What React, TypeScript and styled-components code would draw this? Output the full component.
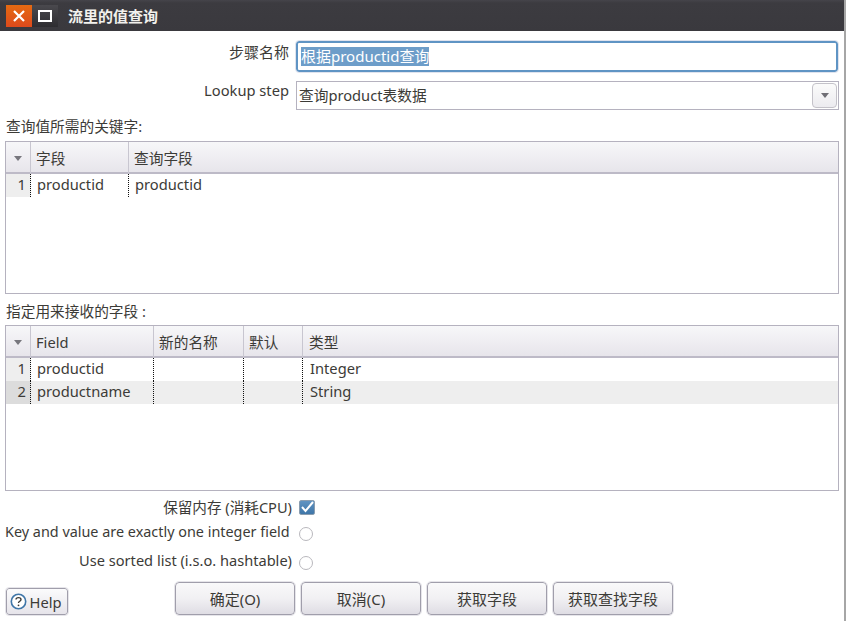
import React from "react";
import styled, { createGlobalStyle } from "styled-components";

const FONT = `"Noto Sans", "Noto Sans CJK SC", sans-serif`;

const GlobalStyle = createGlobalStyle`
    html, body {
        margin: 0;
        padding: 0;
        background: #fff;
    }
    body {
        font-family: ${FONT};
        font-size: 14.7px;
        color: #3c3b37;
    }
`;

const Window = styled.div`
    width: 846px;
    height: 621px;
    box-sizing: border-box;
    border-right: 2px solid #a6a6a6;
    display: flex;
    flex-direction: column;
    overflow: hidden;
`;

const TitleBar = styled.div`
    height: 31px;
    flex: none;
    margin-right: -2px;
    background: linear-gradient(#45444a 0, #3c3b40 3px, #3a393e 100%);
    display: flex;
    align-items: center;
    padding: 0 0 1px 6px;
    box-sizing: border-box;
`;

const WinButton = styled.div<{ $close?: boolean }>`
    width: 26px;
    height: 22px;
    margin-top: 1px;
    display: flex;
    align-items: center;
    justify-content: center;
    background: ${(p) => (p.$close ? "linear-gradient(#e56a12, #dd4a1c)" : "linear-gradient(#4a494e, #2e2d31)")};
    color: #fff;
`;

const Title = styled.span`
    margin: 2px 0 0 10px;
    color: #f2f1ed;
    font-size: 15px;
    font-weight: 700;
    line-height: 1;
`;

const Body = styled.div`
    flex: 1;
    min-height: 0;
    padding: 10px 5px 0;
    display: flex;
    flex-direction: column;
`;

const FormRow = styled.div<{ $h: number; $mb: number }>`
    display: grid;
    grid-template-columns: 284px 1fr;
    column-gap: 7px;
    height: ${(p) => p.$h}px;
    margin-bottom: ${(p) => p.$mb}px;
`;

const FormLabel = styled.label<{ $pt: number; $size?: number }>`
    text-align: right;
    line-height: 18px;
    padding-top: ${(p) => p.$pt}px;
    font-size: ${(p) => p.$size ?? 14.7}px;
`;

const NameInput = styled.div`
    margin-right: 1px;
    box-sizing: border-box;
    height: 31px;
    border: 2px solid #5f94c4;
    border-radius: 3px;
    outline: 1px solid #dfe3ee;
    padding-left: 3px;
    display: flex;
    align-items: center;
`;

const Selected = styled.span`
    background: #6d9dc9;
    color: #fff;
    font-size: 15px;
    line-height: 19px;
`;

const Combo = styled.div`
    box-sizing: border-box;
    height: 29px;
    border: 1px solid #b5b2bf;
    display: flex;
    align-items: center;
    justify-content: space-between;
    padding: 0 1px 0 2px;
`;

const ComboText = styled.span`
    margin-top: -2px;
`;

const ComboButton = styled.div`
    width: 25px;
    height: 25px;
    box-sizing: border-box;
    border: 1px solid #c4c2c9;
    border-radius: 4px;
    background: linear-gradient(#fbfbfb, #ecebef);
    display: flex;
    align-items: center;
    justify-content: center;
`;

const Arrow = styled.span<{ $c: string }>`
    width: 0;
    height: 0;
    border-left: 4px solid transparent;
    border-right: 4px solid transparent;
    border-top: 5px solid ${(p) => p.$c};
`;

const SectionLabel = styled.div<{ $h: number }>`
    height: ${(p) => p.$h}px;
    line-height: 18px;
    padding-left: 1px;
`;

const Table = styled.div<{ $h: number; $mb: number }>`
    box-sizing: border-box;
    width: 834px;
    height: ${(p) => p.$h}px;
    margin-bottom: ${(p) => p.$mb}px;
    border: 1px solid #b5b2bf;
    display: flex;
    flex-direction: column;
`;

const HeaderRow = styled.div<{ $cols: string }>`
    height: 32px;
    flex: none;
    box-sizing: border-box;
    display: grid;
    grid-template-columns: ${(p) => p.$cols};
    background: linear-gradient(#f7f7f9, #e7e5eb);
    border-bottom: 2px solid #bdbac7;
`;

const HeadCell = styled.div<{ $pl?: number }>`
    border-right: 1px solid #c8c6d0;
    padding-left: ${(p) => p.$pl ?? 5}px;
    line-height: 32px;
    white-space: nowrap;
    &:last-child {
        border-right: 0;
    }
`;

const MarkerHead = styled(HeadCell)`
    padding: 0 0 0 8px;
    display: flex;
    align-items: center;
`;

const DataRow = styled.div<{ $cols: string; $alt?: boolean }>`
    height: 23px;
    flex: none;
    display: grid;
    grid-template-columns: ${(p) => p.$cols};
    background: ${(p) => (p.$alt ? "#eeeeee" : "#fff")};
`;

const RowNumber = styled.div<{ $alt?: boolean }>`
    text-align: right;
    padding-right: 4px;
    line-height: 21px;
    background: ${(p) => (p.$alt ? "#dcdcdc" : "#eeeeee")};
    border-right: 1px dotted #111;
`;

const Cell = styled.div<{ $pl?: number }>`
    padding-left: ${(p) => p.$pl ?? 6}px;
    line-height: 21px;
    border-right: 1px dotted #111;
    white-space: nowrap;
    &:last-child {
        border-right: 0;
    }
`;

const OptionRow = styled.div<{ $h: number }>`
    display: grid;
    grid-template-columns: 287px 22px;
    column-gap: 8px;
    height: ${(p) => p.$h}px;
    align-items: center;
`;

const OptionLabel = styled.span<{ $inset?: number; $size?: number }>`
    text-align: right;
    font-size: ${(p) => p.$size ?? 14.6}px;
    white-space: nowrap;
    line-height: 18px;
    margin-right: ${(p) => p.$inset ?? 0}px;
`;

const CheckMark = styled.div`
    width: 16px;
    height: 15px;
    margin-left: -1px;
    border-radius: 2px;
    background: linear-gradient(#5f93c2, #3f76a8);
    border: 1px solid #8a9db0;
    box-sizing: border-box;
    display: flex;
    align-items: center;
    justify-content: center;
`;

const Radio = styled.div`
    width: 14px;
    height: 14px;
    margin: 5px 0 0 -1px;
    box-sizing: border-box;
    border: 1px solid #b9b8bd;
    border-radius: 50%;
    background: #fff;
`;

const Footer = styled.div`
    display: flex;
    align-items: flex-end;
    margin-top: 8px;
`;

const HelpButton = styled.div`
    width: 62px;
    height: 27px;
    margin-left: 1px;
    box-sizing: border-box;
    border: 1px solid #a09eab;
    border-radius: 3px;
    outline: 1px solid #e6e5ea;
    background: linear-gradient(#fbfbfc, #e6e4ea);
    display: flex;
    align-items: center;
    justify-content: center;
    gap: 3px;
    padding-right: 3px;
`;

const ButtonGroup = styled.div`
    display: flex;
    gap: 6px;
    margin-left: 107px;
`;

const Button = styled.div`
    width: 120px;
    height: 33px;
    box-sizing: border-box;
    border: 1px solid #a09eab;
    border-radius: 4px;
    outline: 1px solid #e6e5ea;
    background: linear-gradient(#f9f9fa 0, #f1f0f3 50%, #dfdde4 100%);
    display: flex;
    align-items: center;
    justify-content: center;
    font-size: 15px;
`;

const COLS_TOP = "25px 98px 1fr";
const COLS_BOTTOM = "25px 123px 90px 59px 1fr";

const App = () => (
    <>
        <GlobalStyle />
        <Window>
            <TitleBar>
                <WinButton $close>
                    <svg width="14" height="14" viewBox="0 0 14 14">
                        <path d="M2 2 L12 12 M12 2 L2 12" stroke="#fff" strokeWidth="2.2" />
                    </svg>
                </WinButton>
                <WinButton>
                    <svg width="14" height="12" viewBox="0 0 14 12">
                        <rect x="1" y="1" width="12" height="10" fill="none" stroke="#fff" strokeWidth="2" />
                    </svg>
                </WinButton>
                <Title>流里的值查询</Title>
            </TitleBar>
            <Body>
                <FormRow $h={31} $mb={9}>
                    <FormLabel $pt={2} $size={15}>步骤名称</FormLabel>
                    <NameInput>
                        <Selected>根据productid查询</Selected>
                    </NameInput>
                </FormRow>
                <FormRow $h={29} $mb={7}>
                    <FormLabel $pt={0}>Lookup step</FormLabel>
                    <Combo>
                        <ComboText>查询product表数据</ComboText>
                        <ComboButton>
                            <Arrow $c="#6f6e75" />
                        </ComboButton>
                    </Combo>
                </FormRow>
                <SectionLabel $h={24}>查询值所需的关键字:</SectionLabel>
                <Table $h={153} $mb={8}>
                    <HeaderRow $cols={COLS_TOP}>
                        <MarkerHead>
                            <Arrow $c="#77767d" />
                        </MarkerHead>
                        <HeadCell>字段</HeadCell>
                        <HeadCell>查询字段</HeadCell>
                    </HeaderRow>
                    <DataRow $cols={COLS_TOP}>
                        <RowNumber>1</RowNumber>
                        <Cell>productid</Cell>
                        <Cell>productid</Cell>
                    </DataRow>
                </Table>
                <SectionLabel $h={23}>指定用来接收的字段 :</SectionLabel>
                <Table $h={166} $mb={6}>
                    <HeaderRow $cols={COLS_BOTTOM}>
                        <MarkerHead>
                            <Arrow $c="#77767d" />
                        </MarkerHead>
                        <HeadCell>Field</HeadCell>
                        <HeadCell>新的名称</HeadCell>
                        <HeadCell>默认</HeadCell>
                        <HeadCell $pl={6}>类型</HeadCell>
                    </HeaderRow>
                    <DataRow $cols={COLS_BOTTOM}>
                        <RowNumber>1</RowNumber>
                        <Cell>productid</Cell>
                        <Cell />
                        <Cell />
                        <Cell $pl={7}>Integer</Cell>
                    </DataRow>
                    <DataRow $cols={COLS_BOTTOM} $alt>
                        <RowNumber $alt>2</RowNumber>
                        <Cell>productname</Cell>
                        <Cell />
                        <Cell />
                        <Cell $pl={7}>String</Cell>
                    </DataRow>
                </Table>
                <OptionRow $h={20}>
                    <OptionLabel>保留内存 (消耗CPU)</OptionLabel>
                    <CheckMark>
                        <svg width="14" height="13" viewBox="0 0 14 13">
                            <path d="M2 6 L5.5 10 L13 1" fill="none" stroke="#fff" strokeWidth="2" />
                        </svg>
                    </CheckMark>
                </OptionRow>
                <OptionRow $h={29}>
                    <OptionLabel $inset={3} $size={14.4}>Key and value are exactly one integer field</OptionLabel>
                    <Radio />
                </OptionRow>
                <OptionRow $h={28}>
                    <OptionLabel>Use sorted list (i.s.o. hashtable)</OptionLabel>
                    <Radio />
                </OptionRow>
                <Footer>
                    <HelpButton>
                        <svg width="17" height="17" viewBox="0 0 17 17">
                            <circle cx="8.5" cy="8.5" r="7.2" fill="#fff" stroke="#3f76a8" strokeWidth="1.6" />
                            <path d="M6 6.6 C6 3.9 11 3.9 11 6.6 C11 8.3 8.5 8.2 8.5 10" fill="none" stroke="#3c3b37" strokeWidth="1.4" />
                            <circle cx="8.5" cy="12.3" r="0.9" fill="#3c3b37" />
                        </svg>
                        Help
                    </HelpButton>
                    <ButtonGroup>
                        <Button>确定(O)</Button>
                        <Button>取消(C)</Button>
                        <Button>获取字段</Button>
                        <Button>获取查找字段</Button>
                    </ButtonGroup>
                </Footer>
            </Body>
        </Window>
    </>
);

export default App;
